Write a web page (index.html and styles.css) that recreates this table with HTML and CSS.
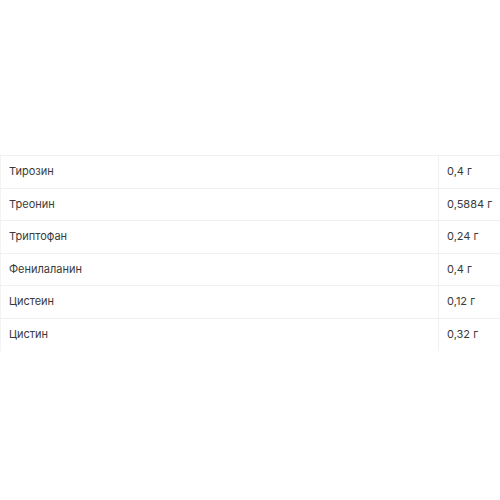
FILE: index.html
```html
<!DOCTYPE html>
<html>
<head>
<meta charset="utf-8">
<link rel="stylesheet" href="styles.css">
</head>
<body>
<div class="page">
  <table class="nutr">
    <tbody>
      <tr><td class="name">Тирозин</td><td class="val">0,4 г</td></tr>
      <tr><td class="name">Треонин</td><td class="val">0,5884 г</td></tr>
      <tr><td class="name">Триптофан</td><td class="val">0,24 г</td></tr>
      <tr><td class="name">Фенилаланин</td><td class="val">0,4 г</td></tr>
      <tr><td class="name">Цистеин</td><td class="val">0,12 г</td></tr>
      <tr><td class="name">Цистин</td><td class="val">0,32 г</td></tr>
    </tbody>
  </table>
</div>
</body>
</html>
```
FILE: styles.css
```css
html, body {
  margin: 0;
  padding: 0;
  background: #fff;
}
.page {
  padding-top: 155px;
  width: 500px;
  overflow: hidden;
}
.nutr {
  border-collapse: collapse;
  width: 560px;
  table-layout: fixed;
  font-family: Inter, "Noto Sans", sans-serif;
  font-size: 11px;
  color: #3a3a3a;
}
.nutr td {
  height: 32.5px;
  padding: 0 8px;
  box-sizing: border-box;
  border-top: 1px solid #f0f0f0;
  vertical-align: middle;
  white-space: nowrap;
  padding-bottom: 1px;
}
.nutr td.name {
  width: 438px;
  border-left: 1px solid #f3f3f3;
}
.nutr td.val {
  border-left: 1px solid #f0f0f0;
}
```
